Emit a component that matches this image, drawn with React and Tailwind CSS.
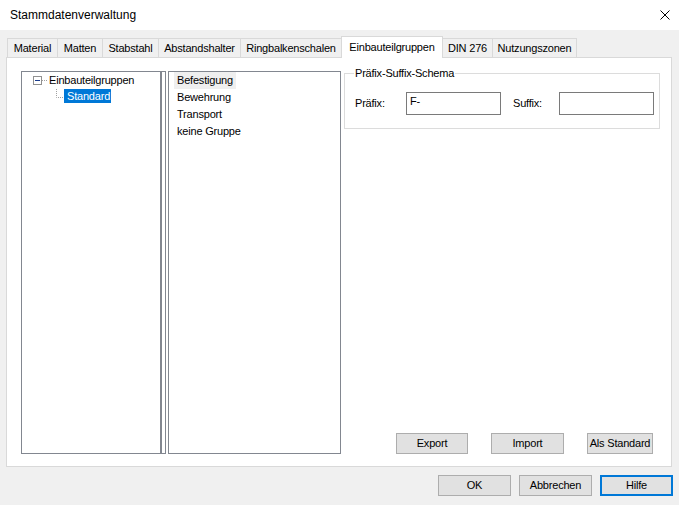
import React from 'react';

const tabs = [
  { label: 'Material', w: 'w-[51px]' },
  { label: 'Matten', w: 'w-[46px]' },
  { label: 'Stabstahl', w: 'w-[57px]' },
  { label: 'Abstandshalter', w: 'w-[83px]' },
  { label: 'Ringbalkenschalen', w: 'w-[102px]' },
  { label: 'Einbauteilgruppen', w: 'w-[102px]', active: true },
  { label: 'DIN 276', w: 'w-[51px]' },
  { label: 'Nutzungszonen', w: 'w-[85px]' },
];

const groups = ['Befestigung', 'Bewehrung', 'Transport', 'keine Gruppe'];

function Btn({ children, className = '', focused = false }) {
  return (
    <button
      className={`h-[21px] bg-[#e1e1e1] text-[11px] leading-none font-normal text-black ${
        focused ? 'border-2 border-[#0078d7]' : 'border border-[#adadad]'
      } ${className}`}
    >
      {children}
    </button>
  );
}

export default function App() {
  return (
    <div className="w-[679px] h-[505px] bg-[#f0f0f0] flex flex-col overflow-hidden text-black font-['Liberation_Sans',Arial,sans-serif] text-[11px] tracking-[-0.2px]">
      {/* Title bar */}
      <div className="h-[30px] shrink-0 bg-white flex items-center justify-between pl-[10px] pr-[9px]">
        <span className="text-[12px] tracking-normal">Stammdatenverwaltung</span>
        <svg width="10" height="10" viewBox="0 0 10 10">
          <path d="M0.5 0.5 L9.5 9.5 M9.5 0.5 L0.5 9.5" stroke="#000" strokeWidth="1" fill="none" />
        </svg>
      </div>

      {/* Tabs */}
      <div className="flex flex-col px-[6px] pt-[6px]">
        <div className="relative z-10 flex items-end h-[22px] pl-[1px]">
          {tabs.map((t, i) =>
            t.active ? (
              <div
                key={t.label}
                className={`${t.w} -ml-[1px] relative z-10 h-[22px] bg-white border border-b-0 border-[#d9d9d9] flex items-center justify-center pb-[1px]`}
              >
                {t.label}
              </div>
            ) : (
              <div
                key={t.label}
                className={`${t.w} ${i === 0 ? '' : '-ml-[1px]'} h-[19px] mb-[1px] bg-[#f0f0f0] border border-b-0 border-[#d9d9d9] flex items-center justify-center`}
              >
                {t.label}
              </div>
            )
          )}
        </div>

        {/* Tab panel */}
        <div className="-mt-[1px] w-[666px] h-[410px] bg-white border border-[#d9d9d9] flex pt-[13px] pb-[12px] pl-[14px] pr-[11px]">
          {/* Tree */}
          <div className="w-[140px] border border-[#828790] bg-white">
            <div className="flex items-center h-[17px] pl-[11px]">
              <span className="w-[9px] h-[9px] border border-[#919191] flex items-center justify-center">
                <span className="w-[5px] h-[1px] bg-[#1a3b8c]" />
              </span>
              <svg width="6" height="1">
                <path d="M0 0.5 H6" stroke="#a0a0a0" strokeDasharray="1 1" />
              </svg>
              <span className="ml-[1px]">Einbauteilgruppen</span>
            </div>
            <div className="flex items-start h-[14px] pl-[34px]">
              <svg width="8" height="14">
                <path d="M0.5 0 V8.5 H8" stroke="#a0a0a0" strokeDasharray="1 1" fill="none" />
              </svg>
              <span className="h-[14px] w-[47px] bg-[#0078d7] text-white flex items-center pl-[3px]">Standard</span>
            </div>
          </div>

          {/* Splitter */}
          <div className="w-[5px] border border-[#828790] bg-white" />

          {/* Group list */}
          <div className="ml-[2px] w-[173px] border border-[#828790] bg-white pl-[5px]">
            {groups.map((g, i) => (
              <div key={g} className="h-[17px] flex items-center">
                <span className={`h-[17px] flex items-center px-[3px] ${i === 0 ? 'bg-[#efefef]' : ''}`}>{g}</span>
              </div>
            ))}
          </div>

          {/* Right side */}
          <div className="ml-[3px] flex-1 flex flex-col justify-between">
            <div className="relative mt-[2px] border border-[#dcdcdc] h-[56px] pt-[18px] pl-[10px] flex items-start">
              <span className="absolute -top-[7px] left-[9px] bg-white px-[1px] leading-[13px]">Präfix-Suffix-Schema</span>
              <span className="w-[51px] h-[23px] flex items-center">Präfix:</span>
              <div className="w-[95px] h-[23px] border border-[#7a7a7a] pl-[3px] pt-[2px] leading-[13px]">F-</div>
              <span className="ml-[12px] w-[46px] h-[23px] flex items-center">Suffix:</span>
              <div className="w-[95px] h-[23px] border border-[#7a7a7a]" />
            </div>
            <div className="flex justify-end gap-[23px] pr-[7px]">
              <Btn className="w-[72px]">Export</Btn>
              <Btn className="w-[73px]">Import</Btn>
              <Btn className="w-[66px]">Als Standard</Btn>
            </div>
          </div>
        </div>
      </div>

      {/* Footer buttons */}
      <div className="flex justify-end gap-[8px] pr-[6px] pt-[8px]">
        <Btn className="w-[73px]">OK</Btn>
        <Btn className="w-[73px]">Abbrechen</Btn>
        <Btn className="w-[73px]" focused>Hilfe</Btn>
      </div>
    </div>
  );
}
